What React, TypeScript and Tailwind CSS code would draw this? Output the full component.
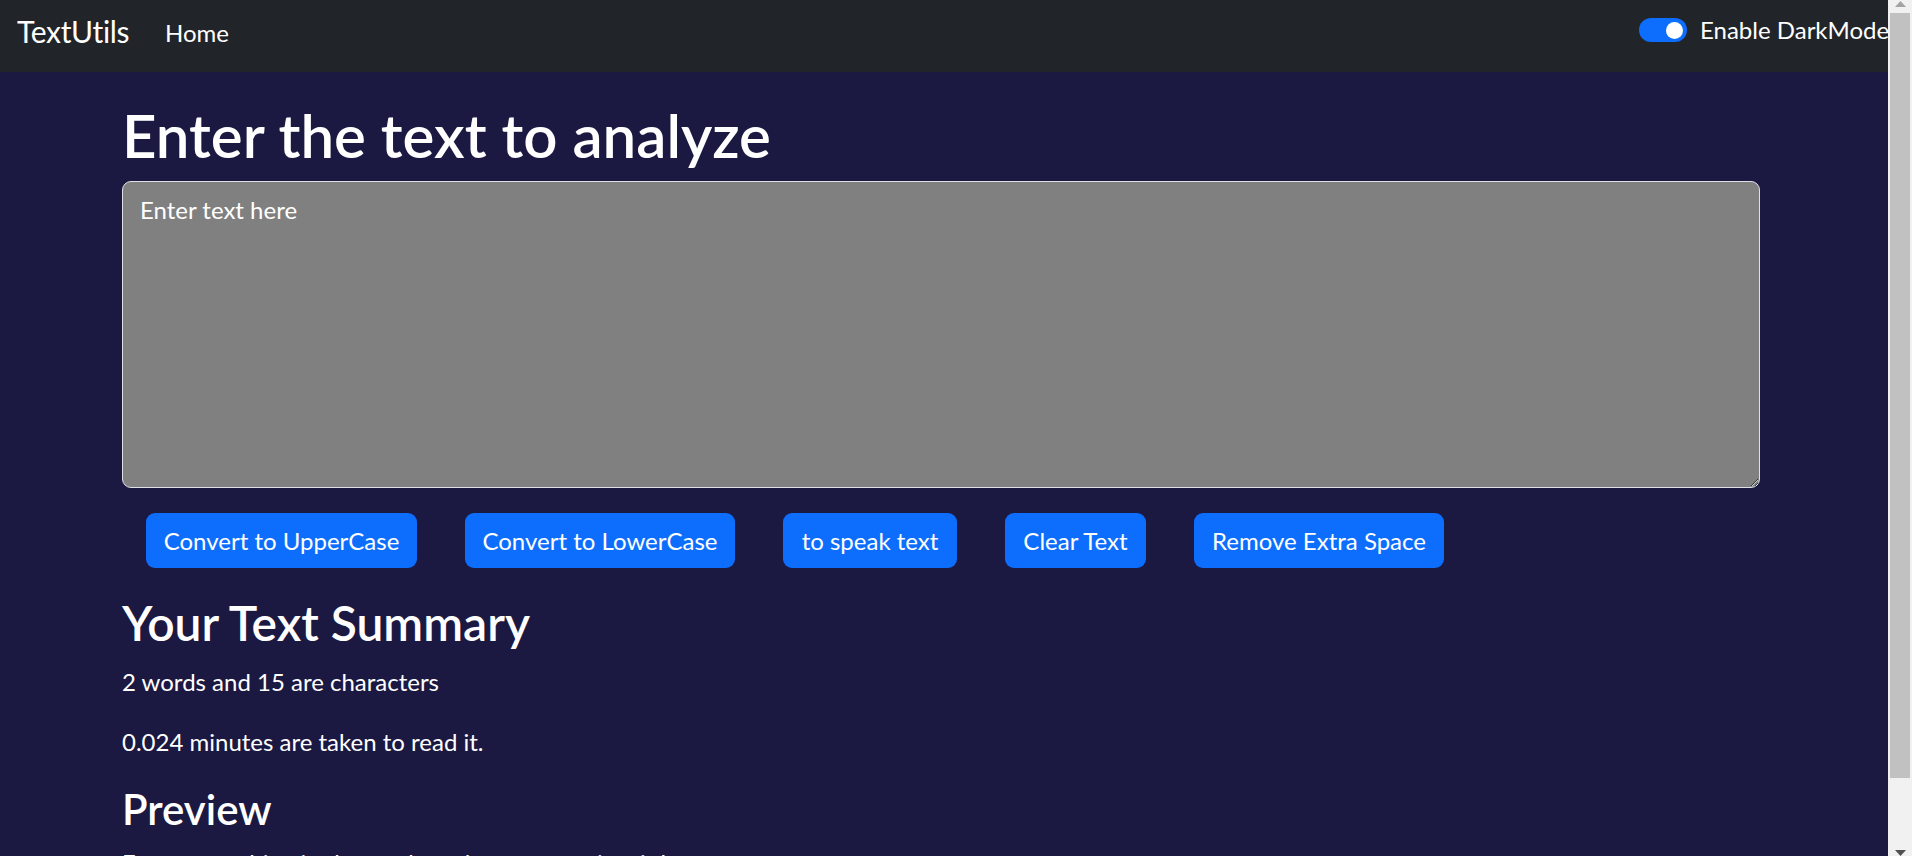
import { useState } from 'react';

const buttons = [
  { label: 'Convert to UpperCase', width: 'w-[271px]' },
  { label: 'Convert to LowerCase', width: 'w-[270px]' },
  { label: 'to speak text', width: 'w-[174px]' },
  { label: 'Clear Text', width: 'w-[141px]' },
  { label: 'Remove Extra Space', width: 'w-[250px]' },
];

function Switch() {
  return (
    <span className="flex h-[24px] w-[48px] items-center justify-end rounded-full bg-[#0d6efd] pr-[4px]">
      <span className="h-[17px] w-[17px] rounded-full bg-white" />
    </span>
  );
}

function ScrollBar() {
  return (
    <div className="flex w-[24px] shrink-0 flex-col bg-[#f1f1f1]">
      <div className="flex h-[13px] justify-center pt-[1px]">
        <svg width="11" height="6" viewBox="0 0 11 6">
          <polygon points="5.5,0 11,6 0,6" fill="#a3a3a3" />
        </svg>
      </div>
      <div className="mx-[2px] h-[765px] bg-[#c1c1c1]" />
      <div className="flex-1" />
      <div className="flex h-[8px] items-end justify-center">
        <svg width="11" height="6" viewBox="0 0 11 6">
          <polygon points="0,0 11,0 5.5,6" fill="#505050" />
        </svg>
      </div>
    </div>
  );
}

export default function App() {
  const [text, setText] = useState('');

  return (
    <div className="flex h-[856px] w-[1912px] overflow-hidden bg-[#1b1942] font-['Lato',sans-serif] text-white">
      <div className="flex min-w-0 flex-1 flex-col">
        <nav className="flex h-[72px] shrink-0 items-start overflow-hidden bg-[#212529] pl-[17px]">
          <span className="mt-[16px] w-[148px] shrink-0 text-[30px] leading-[30px] tracking-[-0.3px]">TextUtils</span>
          <a className="mt-[21px] text-[24px] leading-[24px]">Home</a>
          <div className="ml-auto flex w-[249px] shrink-0 items-start gap-[13px]">
            <div className="mt-[18px]">
              <Switch />
            </div>
            <label className="mt-[18px] whitespace-nowrap text-[24px] leading-[24px]">Enable DarkMode</label>
          </div>
        </nav>

        <main className="pl-[122px] pr-[128px]">
          <h1 className="mt-[27px] text-[60px] font-semibold leading-[72px]">Enter the text to analyze</h1>
          <textarea
            value={text}
            onChange={(e) => setText(e.target.value)}
            placeholder="Enter text here"
            className="mt-[10px] block h-[307px] w-full rounded-[9px] border border-[#dee2e6] bg-[#808080] px-[17px] py-[10px] text-[24px] leading-[36px] text-white outline-none placeholder:text-white"
          />

          <div className="mt-[25px] flex gap-[48px] pl-[24px]">
            {buttons.map((b) => (
              <button
                key={b.label}
                className={`${b.width} flex h-[55px] items-center justify-center rounded-[9px] bg-[#0d6efd] text-[24px] leading-[36px] text-white`}
              >
                {b.label}
              </button>
            ))}
          </div>

          <h2 className="mt-[26px] mb-[12px] text-[48px] font-semibold leading-[58px]">Your Text Summary</h2>
          <p className="mb-[24px] text-[24px] leading-[36px]">2 words and 15 are characters</p>
          <p className="mb-[24px] text-[24px] leading-[36px]">0.024 minutes are taken to read it.</p>
          <h3 className="mb-[11px] text-[42px] font-semibold leading-[50px]">Preview</h3>
          <p className="text-[24px] leading-[36px]">Enter something in the textbox above to preview it here</p>
        </main>
      </div>
      <ScrollBar />
    </div>
  );
}
